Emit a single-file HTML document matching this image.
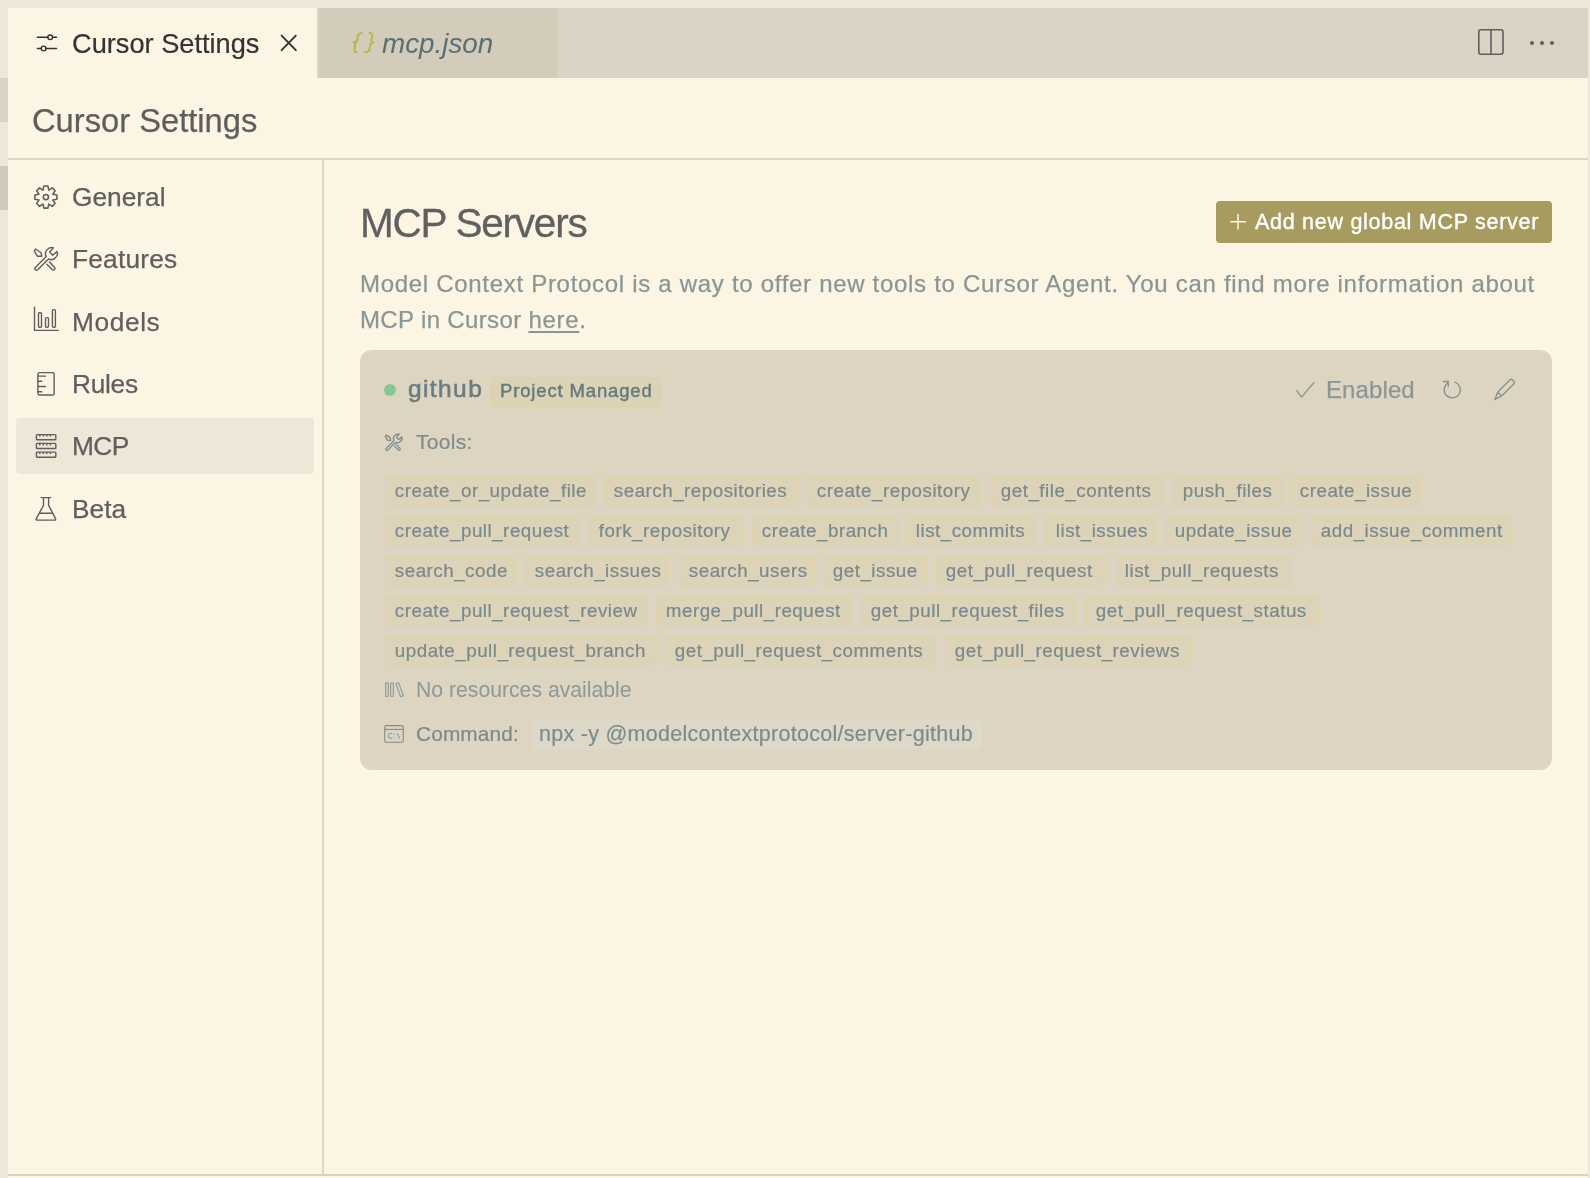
<!DOCTYPE html>
<html>
<head>
<meta charset="utf-8">
<style>
*{box-sizing:border-box;margin:0;padding:0}
html,body{width:1590px;height:1178px;overflow:hidden;background:#EEE7D8;font-family:"Liberation Sans",sans-serif;position:relative}
.abs{position:absolute}
.t{position:absolute;white-space:nowrap;line-height:1;will-change:transform}
#strip1{left:0;top:78px;width:8px;height:44px;background:#D8D4C5}
#strip2{left:0;top:166px;width:8px;height:44px;background:#D0C9BA}
#win{left:8px;top:8px;width:1580px;height:1170px;background:#FCF5E4}
#tabbar{left:8px;top:8px;width:1580px;height:70px;background:#DAD2C3}
#tab1{left:8px;top:8px;width:309px;height:70px;background:#FCF5E4}
#tab2{left:317px;top:8px;width:240px;height:70px;background:#D4CCBA}
#hdrline{left:8px;top:158px;width:1580px;height:2px;background:#DDD6C6}
#sideline{left:322px;top:160px;width:2px;height:1015px;background:#DDD6C6}
#botline{left:8px;top:1174px;width:1580px;height:2px;background:#DAD2C1}
#sel{left:16px;top:418px;width:298px;height:56px;background:#EEE7D7;border-radius:4px}
.nav{font-size:26.3px;color:#5F5F5F;-webkit-text-stroke:0.25px #5F5F5F}
#btn{left:1216px;top:201px;width:336px;height:42px;background:#A89B5F;border-radius:4px}
#card{left:360px;top:350px;width:1192px;height:420px;background:#DDD5C1;border-radius:12px}
.tag{position:absolute;height:30px;background:#DCD3B9;border:1px solid #E0D4A6;border-radius:4px;font-size:18.8px;letter-spacing:0.5px;color:#7A898C;-webkit-text-stroke:0.2px #7A898C;padding-left:8.8px;line-height:28px;white-space:nowrap;will-change:transform}
svg{position:absolute;overflow:visible}
.ic{fill:none;stroke:#5F5F5F;stroke-width:1.4;stroke-linejoin:round;stroke-linecap:round}
.ic2{fill:none;stroke:#86928F;stroke-width:1.35;stroke-linejoin:round;stroke-linecap:round}
</style>
</head>
<body>
<div id="strip1" class="abs"></div>
<div id="strip2" class="abs"></div>
<div id="win" class="abs"></div>
<div id="tabbar" class="abs"></div>
<div id="tab1" class="abs"></div>
<div id="tab2" class="abs"></div>
<div class="abs" style="left:317px;top:8px;width:2px;height:70px;background:#DCD5C3"></div>
<div id="hdrline" class="abs"></div>
<div id="sideline" class="abs"></div>
<div id="botline" class="abs"></div>
<div id="sel" class="abs"></div>

<!-- tab 1 -->
<svg style="left:0;top:0" width="1" height="1"><g style="fill:none;stroke:#333;stroke-width:1.4;stroke-linecap:round">
<path d="M37.4,37.3 H47.85 M52.55,37.3 H56.5 M37.4,48.5 H41.25 M45.95,48.5 H56.5"/>
<circle cx="50.2" cy="37.3" r="2.35"/><circle cx="43.6" cy="48.5" r="2.35"/></g>
<path d="M281.6,35.6 L295.8,50.2 M295.8,35.6 L281.6,50.2" style="fill:none;stroke:#333;stroke-width:1.9;stroke-linecap:round"/>
</svg>
<div class="t" style="left:72px;top:29.5px;font-size:27.2px;color:#333333;-webkit-text-stroke:0.2px #333333">Cursor Settings</div>
<!-- tab 2 -->
<svg style="left:0;top:0" width="1" height="1"><g style="fill:none;stroke:#B8B84C;stroke-width:2.1;stroke-linecap:round;stroke-linejoin:round">
<path d="M361.6,33.0 C359.2,33.0 358.3,33.8 357.9,36.0 L357.3,39.8 C357.0,41.4 356.0,42.3 353.6,42.3 C355.6,42.5 355.3,44.0 355.0,46.0 L354.6,49.6 C354.3,51.6 355.3,52.3 357.0,52.3"/>
<path d="M369.4,33.0 C371.4,33.0 372.6,33.8 372.2,36.0 L371.4,39.8 C371.2,41.4 371.6,42.3 373.6,42.3 C371.4,42.5 370.6,43.6 370.3,45.4 L369.4,49.6 C368.9,51.6 367.4,52.3 364.3,52.3"/>
</g></svg>
<div class="t" style="left:382px;top:29.5px;font-size:27.8px;font-style:italic;color:#5A6E78">mcp.json</div>
<!-- tab bar actions -->
<svg style="left:0;top:0" width="1" height="1">
<rect x="1478.8" y="29.7" width="24.2" height="24.6" rx="2.2" style="fill:none;stroke:#5F5F5F;stroke-width:1.6"/>
<path d="M1491,29.7 V54.3" style="stroke:#5F5F5F;stroke-width:1.6"/>
<circle cx="1532" cy="43" r="2" fill="#5F5F5F"/><circle cx="1542" cy="43" r="2" fill="#5F5F5F"/><circle cx="1552" cy="43" r="2" fill="#5F5F5F"/>
</svg>

<!-- header -->
<div class="t" style="left:32px;top:104.8px;font-size:32.7px;color:#5E5E5E;-webkit-text-stroke:0.25px #5E5E5E">Cursor Settings</div>

<!-- sidebar icons -->
<svg style="left:0;top:0" width="1" height="1">
<g transform="translate(45.9,197.1)" class="ic" style="stroke-width:1.55"><path d="M-2.04,-11.01 L2.04,-11.01 L2.87,-6.93 L6.34,-9.23 L9.23,-6.34 L6.93,-2.87 L11.01,-2.04 L11.01,2.04 L6.93,2.87 L9.23,6.34 L6.34,9.23 L2.87,6.93 L2.04,11.01 L-2.04,11.01 L-2.87,6.93 L-6.34,9.23 L-9.23,6.34 L-6.93,2.87 L-11.01,2.04 L-11.01,-2.04 L-6.93,-2.87 L-9.23,-6.34 L-6.34,-9.23 L-2.87,-6.93 Z"/><circle cx="0" cy="0" r="2.6"/></g>
<g transform="translate(31,244)" class="ic"><path d="M22.4,3.8 A6.2,6.2 0 0 0 15.2,12.6 L4.3,23.4 A1.7,1.7 0 0 0 6.7,25.8 L17.5,15.0 A6.2,6.2 0 0 0 26.0,7.4 L21.7,11.3 L18.6,7.9 Z"/><path d="M4.4,5.0 L9.9,8.5 L10.8,12.2 L6.6,12.3 L3.3,7.1 Z"/><path d="M18.4,17.9 L23.7,23.4 A1.65,1.65 0 0 1 21.4,25.7 L15.9,20.3"/></g>
<g transform="translate(31,290)" class="ic"><path d="M3.5,17.3 V40.4 H27.2"/><rect x="7.5" y="22.8" width="3" height="14.5" rx="1"/><rect x="14.5" y="27.6" width="3" height="9.7" rx="1"/><rect x="21.4" y="19.6" width="3" height="17.7" rx="1"/></g>
<g transform="translate(31,368)" class="ic"><rect x="6.9" y="4.6" width="16.2" height="22.4" rx="1.6"/><path d="M6.9,8.15 H14.5 M6.9,13.2 H10.8 M6.9,18.5 H14.5 M6.9,23.8 H10.8"/></g>
<g transform="translate(31,431)" class="ic"><rect x="5.4" y="3.6" width="19.4" height="5.2" rx="0.8"/><rect x="5.4" y="12.4" width="19.4" height="5.1" rx="0.8"/><rect x="5.4" y="21.1" width="19.4" height="5.1" rx="0.8"/>
<path d="M8.8,3.9 V5.6 M12.35,3.9 V5.6 M15.8,3.9 V5.6 M19.35,3.9 V5.6 M8.8,12.7 V14.4 M12.35,12.7 V14.4 M15.8,12.7 V14.4 M19.35,12.7 V14.4 M8.8,21.4 V23.1 M12.35,21.4 V23.1 M15.8,21.4 V23.1 M19.35,21.4 V23.1" style="stroke-width:1.5;stroke-linecap:butt"/></g>
<g transform="translate(31,494)" class="ic"><path d="M10.2,3.6 H19.6 M12.5,3.6 V11.4 L5.3,24.6 Q4.8,26.1 6.4,26.1 H23.4 Q25,26.1 24.5,24.6 L17.6,11.4 V3.6 M8.7,19.2 H21.1"/></g>
</svg>

<!-- sidebar nav -->
<div class="t nav" style="left:72px;top:183.7px">General</div>
<div class="t nav" style="left:72px;top:246.1px;letter-spacing:0.2px">Features</div>
<div class="t nav" style="left:72px;top:308.5px;letter-spacing:0.6px">Models</div>
<div class="t nav" style="left:72px;top:370.9px;letter-spacing:-0.3px">Rules</div>
<div class="t nav" style="left:72px;top:433.3px;letter-spacing:-0.6px">MCP</div>
<div class="t nav" style="left:72px;top:495.7px">Beta</div>

<!-- main -->
<div class="t" style="left:360px;top:203px;font-size:40.5px;letter-spacing:-1.24px;color:#606060;-webkit-text-stroke:0.3px #606060">MCP Servers</div>
<div id="btn" class="abs"></div>
<svg style="left:0;top:0" width="1" height="1"><path d="M1230.2,221.8 H1245.8 M1238,214 V229.6" style="stroke:#FBF8EE;stroke-width:1.5"/></svg>
<div class="t" style="left:1254.5px;top:212.3px;font-size:21.5px;letter-spacing:0.72px;color:#FFFFFF;-webkit-text-stroke:0.4px #FFFFFF">Add new global MCP server</div>
<div class="t" style="left:360px;top:266.2px;font-size:24px;letter-spacing:0.7px;color:#8A9696;line-height:36px;-webkit-text-stroke:0.25px #8A9696">Model Context Protocol is a way to offer new tools to Cursor Agent. You can find more information about<br><span style="letter-spacing:0.35px">MCP in Cursor </span><u style="text-decoration-thickness:1.5px;text-underline-offset:3px">here</u>.</div>

<div id="card" class="abs"></div>
<div class="abs" style="left:384px;top:384px;width:12px;height:12px;border-radius:6px;background:#88C694"></div>
<div class="t" style="left:408px;top:377px;font-size:24.5px;letter-spacing:1.4px;font-weight:400;-webkit-text-stroke:0.6px #6A7C82;color:#6A7C82">github</div>
<div class="abs" style="left:490px;top:377.4px;width:172px;height:29.4px;background:#DBD3B5;border:1px solid #E0D4A6;border-radius:4px"></div>
<div class="t" style="left:500px;top:382.3px;font-size:18.5px;letter-spacing:0.85px;font-weight:400;-webkit-text-stroke:0.45px #67797F;color:#67797F">Project Managed</div>

<svg style="left:0;top:0" width="1" height="1">
<path d="M1296.75,390.66 L1301.6,397.15 L1313.9,382.6" class="ic2"/>
<path d="M1454.8,382.1 A8.1,8.1 0 1 1 1446.4,384.2 L1448.3,381.6 M1443.2,381.5 H1448.3 V386.6" class="ic2"/>
<path d="M1494.85,399.45 L1497.66,392.3 L1510.1,379.8 Q1511.2,378.8 1512.3,379.8 L1514,381.5 Q1515,382.6 1514,383.7 L1501.5,396.1 Z M1497.66,392.3 L1501.5,396.1" class="ic2"/>
</svg>
<div class="t" style="left:1325.5px;top:378.3px;font-size:24px;letter-spacing:0.1px;color:#8A9697;-webkit-text-stroke:0.25px #8A9697">Enabled</div>

<svg style="left:0;top:0" width="1" height="1">
<g transform="translate(383,431.5) scale(0.72)" class="ic" style="stroke:#7F8C8E;stroke-width:1.8"><path d="M22.4,3.8 A6.2,6.2 0 0 0 15.2,12.6 L4.3,23.4 A1.7,1.7 0 0 0 6.7,25.8 L17.5,15.0 A6.2,6.2 0 0 0 26.0,7.4 L21.7,11.3 L18.6,7.9 Z"/><path d="M4.4,5.0 L9.9,8.5 L10.8,12.2 L6.6,12.3 L3.3,7.1 Z"/><path d="M18.4,17.9 L23.7,23.4 A1.65,1.65 0 0 1 21.4,25.7 L15.9,20.3"/></g>
</svg>
<div class="t" style="left:416px;top:431px;font-size:21px;letter-spacing:0.3px;color:#7F8C8E;-webkit-text-stroke:0.2px #7F8C8E">Tools:</div>

<div class="tag" style="left:384.5px;top:476.0px;width:211.0px"><span>create_or_update_file</span></div>
<div class="tag" style="left:604.2px;top:476.0px;width:194.7px"><span>search_repositories</span></div>
<div class="tag" style="left:807.4px;top:476.0px;width:173.7px"><span>create_repository</span></div>
<div class="tag" style="left:990.6px;top:476.0px;width:172.8px"><span>get_file_contents</span></div>
<div class="tag" style="left:1172.6px;top:476.0px;width:108.9px"><span>push_files</span></div>
<div class="tag" style="left:1290.4px;top:476.0px;width:131.1px"><span>create_issue</span></div>
<div class="tag" style="left:384.7px;top:516.0px;width:194.7px"><span>create_pull_request</span></div>
<div class="tag" style="left:588.5px;top:516.0px;width:153.8px"><span>fork_repository</span></div>
<div class="tag" style="left:751.5px;top:516.0px;width:146.2px"><span>create_branch</span></div>
<div class="tag" style="left:906.4px;top:516.0px;width:130.0px"><span>list_commits</span></div>
<div class="tag" style="left:1045.5px;top:516.0px;width:111.1px"><span>list_issues</span></div>
<div class="tag" style="left:1165.3px;top:516.0px;width:137.0px"><span>update_issue</span></div>
<div class="tag" style="left:1311.3px;top:516.0px;width:200.4px"><span>add_issue_comment</span></div>
<div class="tag" style="left:384.7px;top:556.0px;width:131.5px"><span>search_code</span></div>
<div class="tag" style="left:525.3px;top:556.0px;width:144.3px"><span>search_issues</span></div>
<div class="tag" style="left:678.5px;top:556.0px;width:136.2px"><span>search_users</span></div>
<div class="tag" style="left:823.2px;top:556.0px;width:104.3px"><span>get_issue</span></div>
<div class="tag" style="left:936.4px;top:556.0px;width:168.9px"><span>get_pull_request</span></div>
<div class="tag" style="left:1114.7px;top:556.0px;width:174.7px"><span>list_pull_requests</span></div>
<div class="tag" style="left:384.7px;top:596.0px;width:262.8px"><span>create_pull_request_review</span></div>
<div class="tag" style="left:656.4px;top:596.0px;width:195.1px"><span>merge_pull_request</span></div>
<div class="tag" style="left:860.6px;top:596.0px;width:215.8px"><span>get_pull_request_files</span></div>
<div class="tag" style="left:1085.5px;top:596.0px;width:233.2px"><span>get_pull_request_status</span></div>
<div class="tag" style="left:384.7px;top:636.0px;width:271.7px"><span>update_pull_request_branch</span></div>
<div class="tag" style="left:664.9px;top:636.0px;width:270.8px"><span>get_pull_request_comments</span></div>
<div class="tag" style="left:944.5px;top:636.0px;width:246.1px"><span>get_pull_request_reviews</span></div>

<svg style="left:0;top:0" width="1" height="1">
<g transform="translate(380,676)" style="fill:none;stroke:#8C999B;stroke-width:1.1">
<rect x="5.7" y="6.9" width="2.6" height="13.6" rx="0.8"/><rect x="10.7" y="6.9" width="2.6" height="13.6" rx="0.8"/>
<path d="M15.9,7.7 L18.6,6.9 L23.4,19.8 L20.6,20.6 Z" style="stroke-linejoin:round"/></g>
<g transform="translate(380,719)" style="fill:none;stroke:#7E8C90;stroke-width:1.1">
<rect x="4.75" y="6.65" width="18.5" height="16.6" rx="1.4"/><path d="M4.75,10.4 H23.25"/>
<path d="M12.2,14.5 Q8.3,13.6 8.3,16.9 Q8.3,20.1 12.2,19.3" style="stroke-width:1"/><path d="M17.4,14.3 L19.5,19.5" style="stroke-width:1"/>
<circle cx="14.5" cy="15.4" r="0.55" fill="#7E8C90" stroke="none"/><circle cx="14.5" cy="18.7" r="0.55" fill="#7E8C90" stroke="none"/></g>
</svg>
<div class="t" style="left:416px;top:679px;font-size:21.2px;color:#8C9899">No resources available</div>
<div class="t" style="left:416px;top:724px;font-size:20.8px;letter-spacing:0.15px;color:#7B8A8F;-webkit-text-stroke:0.2px #7B8A8F">Command:</div>
<div class="abs" style="left:532px;top:718.5px;width:450px;height:31px;background:#DDD8C8;border-radius:5px"></div>
<div class="t" style="left:539px;top:724px;-webkit-text-stroke:0.2px #7D8B8E;font-size:21.5px;letter-spacing:0.28px;color:#7D8B8E">npx -y @modelcontextprotocol/server-github</div>
</body>
</html>
